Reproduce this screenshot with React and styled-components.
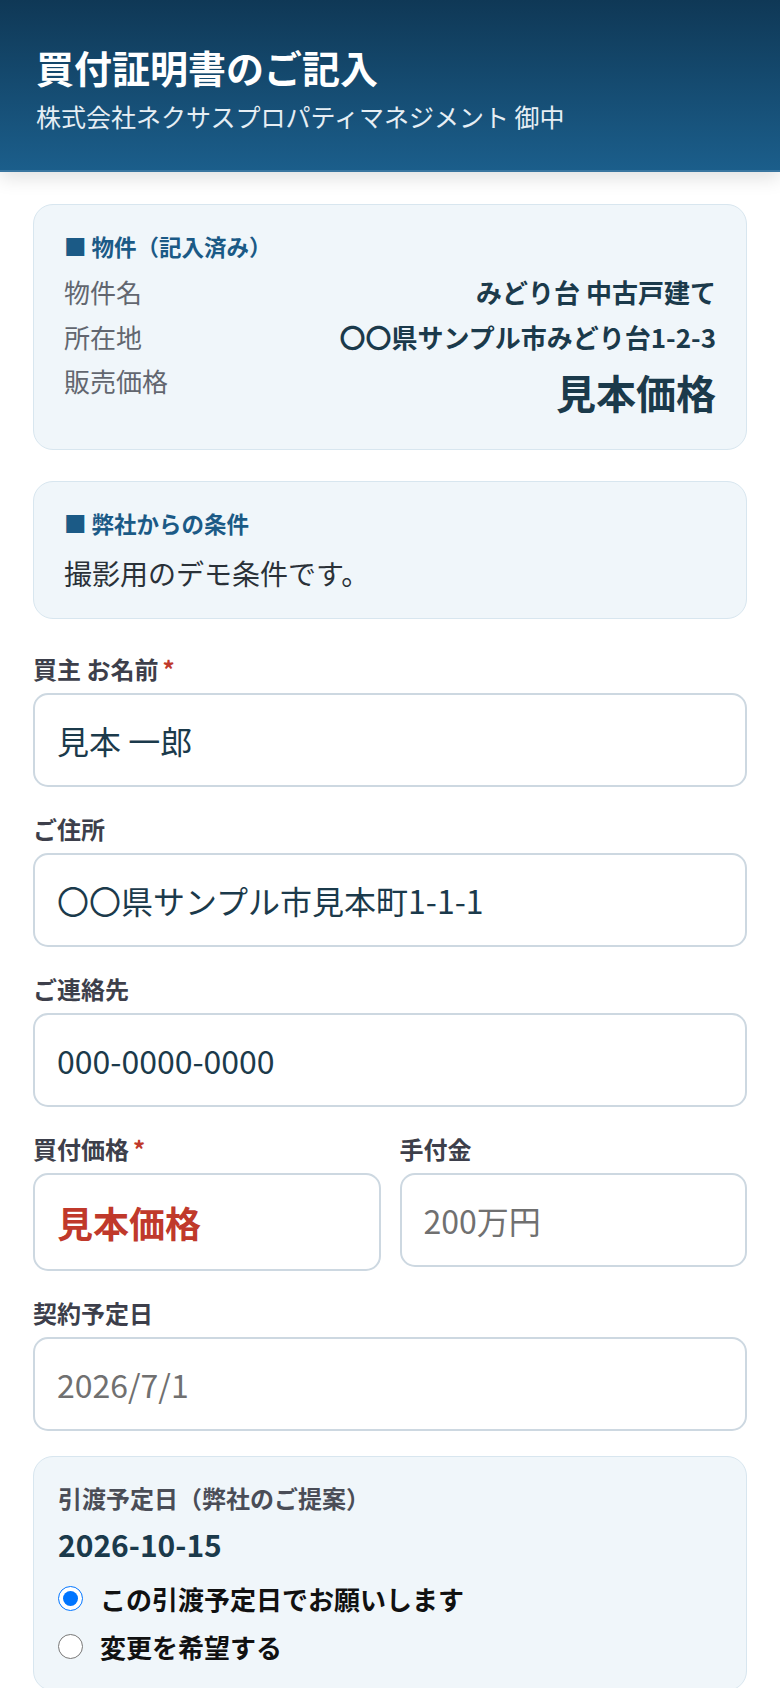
import React from 'react';
import styled, { createGlobalStyle } from 'styled-components';

const GlobalStyle = createGlobalStyle`
    * { box-sizing: border-box; }
    body {
        margin: 0;
        background: #fff;
        font-family: "Noto Sans CJK JP", "Noto Sans", sans-serif;
        color: #1b3a4b;
    }
`;

const Header = styled.header`
    padding: 42px 36px 36px;
    background: linear-gradient(180deg, #0f3856 0%, #1b5e8b 100%);
    border-bottom: 2px solid #3a76a0;
    box-shadow: 0 6px 18px rgba(0, 0, 0, 0.12);
    color: #fff;

    h1 {
        margin: 0 0 7px;
        font-size: 38px;
        line-height: 49px;
        font-weight: 700;
    }
    p {
        margin: 0;
        font-size: 25px;
        line-height: 36px;
        color: #e6eef4;
    }
`;

const Main = styled.main`
    padding: 32px 33px 40px;
    display: flex;
    flex-direction: column;
`;

const Card = styled.section`
    background: #f0f6fa;
    border: 1.5px solid #d8e6ef;
    border-radius: 20px;
    padding: ${p => (p.$tight ? '23.5px 24px' : '24px 30px')};
    margin-bottom: ${p => p.$space ?? 31}px;
`;

const CardTitle = styled.h2`
    margin: 0 0 7px;
    font-size: 22.5px;
    line-height: 34px;
    font-weight: 700;
    color: #1b5a86;
`;

const InfoRow = styled.div`
    display: flex;
    justify-content: space-between;
    align-items: flex-start;
    font-size: 26px;
    line-height: 44.5px;
`;

const InfoLabel = styled.span`
    color: #62666f;
`;

const InfoValue = styled.span`
    font-weight: 700;
    color: #1b3a4b;
    text-align: right;
    font-size: ${p => (p.$big ? '40px' : '26px')};
    line-height: ${p => (p.$big ? '66px' : '44.5px')};
`;

const Note = styled.p`
    margin: 12px 0 0;
    font-size: 28px;
    line-height: 42px;
    color: #2a3138;
`;

const Field = styled.div`
    display: flex;
    flex-direction: column;
    margin-bottom: 25px;
    min-width: 0;
`;

const Label = styled.label`
    font-size: 24px;
    line-height: 34px;
    font-weight: 700;
    color: #3d3f4b;
    margin-bottom: 7px;

    em {
        font-style: normal;
        color: #c0392b;
        margin-left: 4px;
    }
`;

const Input = styled.input`
    width: 100%;
    height: ${p => (p.$strong ? '98px' : '94px')};
    padding: 0 22px;
    border: 2px solid #cdd8e1;
    border-radius: 15px;
    background: #fff;
    font-family: inherit;
    font-size: ${p => (p.$strong ? '36px' : '32px')};
    font-weight: ${p => (p.$strong ? 700 : 400)};
    color: ${p => (p.$strong ? '#c0392b' : '#1b3a4b')};
    outline: none;

    &::placeholder {
        color: #707070;
        opacity: 1;
    }
`;

const Pair = styled.div`
    display: grid;
    grid-template-columns: 1fr 1fr;
    column-gap: 19px;
    align-items: start;
`;

const SubLabel = styled.div`
    font-size: 24px;
    line-height: 34px;
    font-weight: 700;
    color: #4a4d57;
`;

const DateText = styled.div`
    margin-top: 7px;
    font-size: 30px;
    line-height: 44px;
    font-weight: 700;
    color: #1b3a4b;
`;

const Options = styled.div`
    display: flex;
    flex-direction: column;
    gap: 8px;
    margin-top: 13px;
`;

const Option = styled.label`
    display: flex;
    align-items: center;
    gap: 17px;
    font-size: 26px;
    line-height: 40px;
    font-weight: 700;
    color: #111;

    input {
        margin: 0;
        width: 25px;
        height: 25px;
    }
`;

export default function App() {
    return (
        <>
            <GlobalStyle />
            <Header>
                <h1>買付証明書のご記入</h1>
                <p>株式会社ネクサスプロパティマネジメント 御中</p>
            </Header>
            <Main>
                <Card>
                    <CardTitle>■ 物件（記入済み）</CardTitle>
                    <InfoRow>
                        <InfoLabel>物件名</InfoLabel>
                        <InfoValue>みどり台 中古戸建て</InfoValue>
                    </InfoRow>
                    <InfoRow>
                        <InfoLabel>所在地</InfoLabel>
                        <InfoValue>〇〇県サンプル市みどり台1-2-3</InfoValue>
                    </InfoRow>
                    <InfoRow>
                        <InfoLabel>販売価格</InfoLabel>
                        <InfoValue $big>見本価格</InfoValue>
                    </InfoRow>
                </Card>

                <Card $space={33}>
                    <CardTitle>■ 弊社からの条件</CardTitle>
                    <Note>撮影用のデモ条件です。</Note>
                </Card>

                <Field>
                    <Label>買主 お名前<em>*</em></Label>
                    <Input defaultValue="見本 一郎" />
                </Field>
                <Field>
                    <Label>ご住所</Label>
                    <Input defaultValue="〇〇県サンプル市見本町1-1-1" />
                </Field>
                <Field>
                    <Label>ご連絡先</Label>
                    <Input defaultValue="000-0000-0000" />
                </Field>
                <Pair>
                    <Field>
                        <Label>買付価格<em>*</em></Label>
                        <Input $strong defaultValue="見本価格" />
                    </Field>
                    <Field>
                        <Label>手付金</Label>
                        <Input placeholder="200万円" />
                    </Field>
                </Pair>
                <Field>
                    <Label>契約予定日</Label>
                    <Input placeholder="2026/7/1" />
                </Field>

                <Card $tight>
                    <SubLabel>引渡予定日（弊社のご提案）</SubLabel>
                    <DateText>2026-10-15</DateText>
                    <Options>
                        <Option>
                            <input type="radio" name="handover" defaultChecked />
                            この引渡予定日でお願いします
                        </Option>
                        <Option>
                            <input type="radio" name="handover" />
                            変更を希望する
                        </Option>
                    </Options>
                </Card>
            </Main>
        </>
    );
}
